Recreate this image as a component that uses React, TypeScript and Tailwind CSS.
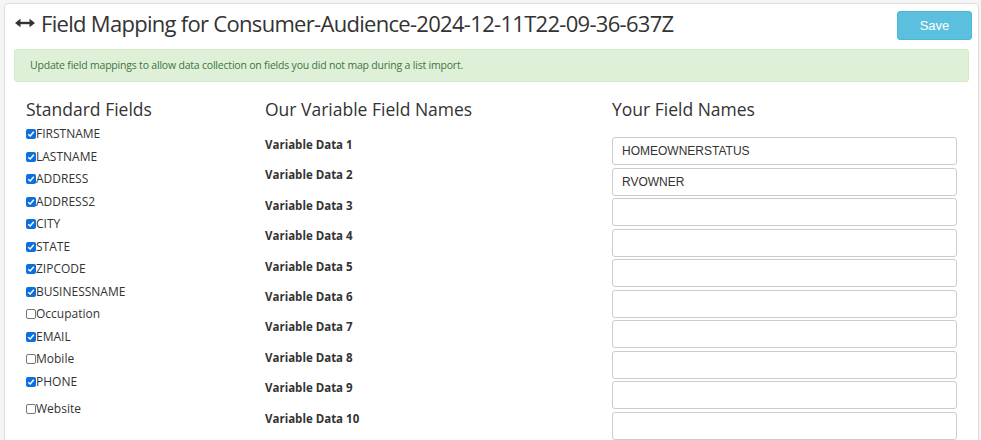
import React from "react";

const std: [string, boolean][] = [
  ["FIRSTNAME", true],
  ["LASTNAME", true],
  ["ADDRESS", true],
  ["ADDRESS2", true],
  ["CITY", true],
  ["STATE", true],
  ["ZIPCODE", true],
  ["BUSINESSNAME", true],
  ["Occupation", false],
  ["EMAIL", true],
  ["Mobile", false],
  ["PHONE", true],
];

const vals = ["HOMEOWNERSTATUS", "RVOWNER", "", "", "", "", "", "", "", ""];

function Box({ checked }: { checked: boolean }) {
  return checked ? (
    <span className="inline-flex w-[10px] h-[10px] rounded-[2px] bg-[#0b6fde] items-center justify-center shrink-0">
      <svg width="8" height="8" viewBox="0 0 8 8">
        <path d="M1.2 4.2 L3.2 6 L6.8 1.8" fill="none" stroke="white" strokeWidth="1.5" />
      </svg>
    </span>
  ) : (
    <span className="inline-block w-[10px] h-[10px] rounded-[2px] border border-[#767676] bg-white shrink-0" />
  );
}

export default function App() {
  const font = { fontFamily: "'Open Sans', 'Noto Sans', sans-serif" };
  return (
    <div className="min-h-[440px] bg-[#f5f5f5] pl-[4px] pr-[2px] pt-[3px] text-[#333]" style={font}>
      <div className="bg-white border border-[#ddd] rounded-[4px] pb-6">
        <div className="flex items-start justify-between pl-[9px] pr-[6px] pt-[7px]">
          <h1 className="flex items-center -mt-[3px] text-[22px] leading-[30px] font-medium text-[#333] tracking-[-0.7px]">
            <svg width="20" height="10" viewBox="0 0 20 10" className="mr-[6px] ml-[1px]">
              <path d="M2 5 H18" stroke="#333" strokeWidth="2.4" />
              <path d="M0 5 L5.5 0.8 V9.2 Z" fill="#333" />
              <path d="M20 5 L14.5 0.8 V9.2 Z" fill="#333" />
            </svg>
            Field Mapping for Consumer-Audience-2024-12-11T22-09-36-637Z
          </h1>
          <button
            className="w-[75px] h-[29px] rounded-[3px] bg-[#5bc0de] border border-[#46b8da] text-white text-[13px]"
            style={{ fontFamily: "'Liberation Sans', Arial, sans-serif" }}
          >
            Save
          </button>
        </div>
        <div className="mx-[9px] mt-[9px] h-[33px] flex items-center px-[15px] bg-[#dff0d8] border border-[#d6e9c6] rounded-[3px] text-[#3c763d] text-[10.5px] tracking-[-0.2px]">
          Update field mappings to allow data collection on fields you did not map during a list import.
        </div>
        <div className="flex pl-[21px] pt-[15px]">
          <div className="w-[239px]">
            <h2 className="text-[17.5px] leading-[24px] text-[#333] font-medium">Standard Fields</h2>
            <div className="mt-[2px] flex flex-col">
              {std.map(([n, c]) => (
                <label key={n} className="flex items-center h-[22.5px] text-[12px] text-[#333]">
                  <Box checked={c} />
                  {n}
                </label>
              ))}
              <label className="flex items-center h-[22.5px] mt-[4.5px] text-[12px] text-[#333]">
                <Box checked={false} />
                Website
              </label>
            </div>
          </div>
          <div className="w-[347px]">
            <h2 className="text-[17.5px] leading-[24px] text-[#333] font-medium">Our Variable Field Names</h2>
            <div className="mt-[15px] flex flex-col">
              {vals.map((_, i) => (
                <div key={i} className="h-[30.4px] text-[11.5px] font-bold text-[#333]">
                  Variable Data {i + 1}
                </div>
              ))}
            </div>
          </div>
          <div className="w-[345px]">
            <h2 className="text-[17.5px] leading-[24px] text-[#333] font-medium">Your Field Names</h2>
            <div className="mt-[16px] flex flex-col gap-[2.5px]">
              {vals.map((v, i) => (
                <input
                  key={i}
                  readOnly
                  value={v}
                  className="h-[28px] w-[345px] border border-[#ccc] rounded-[3px] px-[9px] text-[12px] text-[#333] outline-none"
                  style={{ fontFamily: "'Liberation Sans', Arial, sans-serif" }}
                />
              ))}
            </div>
          </div>
        </div>
      </div>
    </div>
  );
}
